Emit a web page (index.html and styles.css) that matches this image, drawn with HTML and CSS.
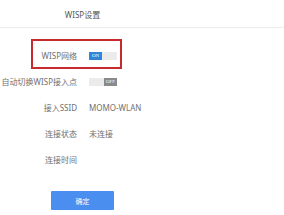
FILE: index.html
```html
<!DOCTYPE html>
<html>
<head>
<meta charset="utf-8">
<link rel="stylesheet" href="styles.css">
</head>
<body>
<div class="page">
  <div class="header"><span class="title">WISP设置</span></div>
  <div class="form">
    <div class="row">
      <div class="label">WISP网络</div>
      <div class="value"><span class="toggle on"><span class="knob-text">ON</span><span class="rest"></span></span></div>
    </div>
    <div class="row">
      <div class="label">自动切换WISP接入点</div>
      <div class="value"><span class="toggle off"><span class="rest"></span><span class="knob-text">OFF</span></span></div>
    </div>
    <div class="row">
      <div class="label">接入SSID</div>
      <div class="value">MOMO-WLAN</div>
    </div>
    <div class="row">
      <div class="label">连接状态</div>
      <div class="value">未连接</div>
    </div>
    <div class="row">
      <div class="label">连接时间</div>
      <div class="value"></div>
    </div>
    <div class="actions"><button class="btn">确定</button></div>
  </div>
  <div class="highlight"></div>
</div>
</body>
</html>
```
FILE: styles.css
```css
html, body {
  margin: 0;
  padding: 0;
  background: #fff;
}
.page {
  position: relative;
  width: 284px;
  height: 215px;
  overflow: hidden;
  font-family: "Noto Sans", "Noto Sans CJK SC", sans-serif;
  font-size: 8px;
  color: #707070;
}
.header {
  height: 27px;
  border-bottom: 1px solid #ececec;
  display: flex;
  align-items: center;
}
.title {
  width: 165px;
  text-align: center;
  color: #555;
  padding-top: 1px;
}
.form {
  padding-top: 14px;
}
.row {
  height: 26px;
  display: flex;
  align-items: center;
  gap: 12px;
}
.label {
  width: 77px;
  text-align: right;
  white-space: nowrap;
}
.value {
  white-space: nowrap;
}
.toggle {
  display: flex;
  width: 28px;
  height: 8px;
  margin-top: 1px;
}
.toggle .knob-text {
  width: 13px;
  height: 8px;
  color: #fff;
  font-size: 5px;
  line-height: 8px;
  text-align: center;
  font-family: "Liberation Serif", serif;
}
.toggle .rest {
  flex: 1;
  background: #ebebeb;
}
.toggle.on .knob-text {
  background: #2f86d6;
}
.toggle.off .knob-text {
  background: #8a8a8a;
}
.actions {
  padding-top: 19px;
  padding-left: 51px;
}
.btn {
  width: 63px;
  height: 19px;
  border: none;
  border-radius: 1px;
  background: #4a8ff0;
  color: #fff;
  font-family: "Noto Sans", "Noto Sans CJK SC", sans-serif;
  font-size: 7px;
  padding: 0;
}
.highlight {
  position: absolute;
  left: 31px;
  top: 39px;
  width: 87px;
  height: 26px;
  border: 2px solid #c62a2c;
}
```
